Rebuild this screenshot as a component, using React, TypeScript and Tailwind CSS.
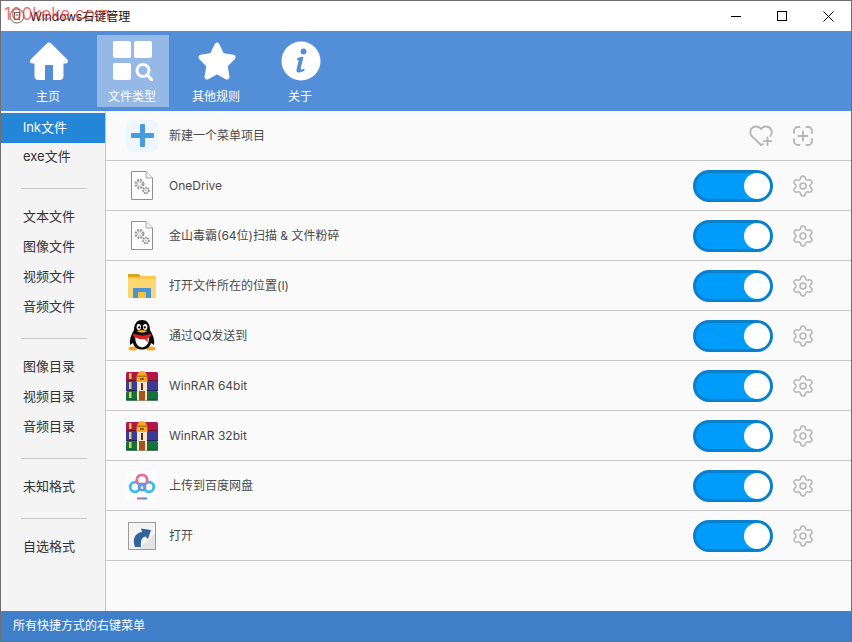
import { ReactNode } from 'react'
import { Settings } from 'lucide-react'

const FONT = "font-['Inter','Noto_Sans_CJK_SC',sans-serif]"

function HomeIcon() {
  return (
    <svg width="40" height="40" viewBox="0 0 40 40">
      <path
        d="M20 1.5 a3 3 0 0 1 2.2 1 L38.4 18.6 a2.2 2.2 0 0 1 -1.6 3.8 H34.5 V35 a4 4 0 0 1 -4 4 H24 V24 H16 V39 H9.5 a4 4 0 0 1 -4 -4 V22.4 H3.2 a2.2 2.2 0 0 1 -1.6 -3.8 L17.8 2.5 a3 3 0 0 1 2.2 -1z"
        fill="#fff"
      />
    </svg>
  )
}

function FileTypeIcon() {
  return (
    <svg width="40" height="40" viewBox="0 0 40 40">
      <rect x="0" y="0" width="18" height="17" rx="2" fill="#fff" />
      <rect x="21" y="0" width="18" height="17" rx="2" fill="#fff" />
      <rect x="0" y="22" width="18" height="17" rx="2" fill="#fff" />
      <circle cx="30" cy="29.5" r="6" fill="none" stroke="#fff" strokeWidth="3" />
      <path d="M34.5 34 L39 39" stroke="#fff" strokeWidth="3.2" strokeLinecap="round" />
    </svg>
  )
}

function StarIcon() {
  return (
    <svg width="40" height="40" viewBox="0 0 40 40">
      <path
        d="M20 4 L25 14.5 L36 16.2 L28 24.5 L30 36 L20 30.5 L10 36 L12 24.5 L4 16.2 L15 14.5z"
        fill="#fff"
        stroke="#fff"
        strokeWidth="5"
        strokeLinejoin="round"
      />
    </svg>
  )
}

function InfoIcon() {
  return (
    <svg width="40" height="40" viewBox="0 0 40 40">
      <circle cx="20" cy="20" r="19.5" fill="#fff" />
      <circle cx="22.5" cy="10.5" r="3" fill="#528fd8" />
      <path
        d="M16 17.5 Q19 15.5 22.5 15.8 L19.8 27 Q19.5 29 21 28.6 L23.5 27.5 L23.5 29.5 Q20 32 17 31.5 Q15 31 15.6 28 L17.8 19 L16 19.5z"
        fill="#528fd8"
      />
    </svg>
  )
}

function NavItem({ icon, label, active }: { icon: ReactNode; label: string; active?: boolean }) {
  return (
    <div
      className={
        'w-[72px] h-[72px] flex flex-col items-center pt-[6px] text-[12px] leading-[16px] text-white ' +
        (active ? 'bg-[#95b9e7]' : '')
      }
    >
      {icon}
      <span className="mt-[8px] mr-[2px]">{label}</span>
    </div>
  )
}

function DocGearIcon() {
  return (
    <svg width="22" height="29" viewBox="0 0 22 29">
      <path d="M.5.5 H15 L21.5 7 V28.5 H.5z" fill="#fff" stroke="#8f8f8f" />
      <path d="M15 .5 V7 H21.5" fill="#f2f2f2" stroke="#a8a8a8" />
      <circle cx="8.5" cy="13" r="3.8" fill="none" stroke="#9a9a9a" strokeWidth="2.4" strokeDasharray="2 1" />
      <circle cx="8.5" cy="13" r="2" fill="none" stroke="#c4c4c4" />
      <circle cx="15" cy="19.5" r="2.8" fill="none" stroke="#8e8e8e" strokeWidth="2" strokeDasharray="1.6 .8" />
      <circle cx="15" cy="19.5" r="1" fill="#bbb" />
    </svg>
  )
}

function PlusIcon() {
  return (
    <div className="w-[32px] h-[32px] flex items-center justify-center rounded-[6px] bg-[#eef5fc]">
      <svg width="23" height="23" viewBox="0 0 23 23">
        <rect x="9" y="0" width="5" height="23" rx="1" fill="#4a9ae0" />
        <rect x="0" y="9" width="23" height="5" rx="1" fill="#4a9ae0" />
      </svg>
    </div>
  )
}

function FolderIcon() {
  return (
    <svg width="28" height="25" viewBox="0 0 28 25">
      <path d="M0 1 H11 L13 4 H0z" fill="#d6a51e" />
      <path d="M0 4 H28 V25 H0z" fill="#fdd872" />
      <path d="M0 4 H12 L13 3 H27 a1 1 0 0 1 1 1 V6 H0z" fill="#f7c94f" />
      <path d="M5 15 H23 V25 H18 V19 H10 V25 H5z" fill="#4a94d6" />
      <rect x="10" y="19" width="8" height="6" fill="#f5c33a" />
    </svg>
  )
}

function QQIcon() {
  return (
    <svg width="28" height="32" viewBox="0 0 28 32">
      <ellipse cx="5" cy="28.5" rx="4.5" ry="2" fill="#f5a623" />
      <ellipse cx="23" cy="28.5" rx="4.5" ry="2" fill="#f5a623" />
      <path d="M14 0 C8 0 6 5 6 10 C3 15 1 20 2 25 L5 23 C6 27 9 29.5 14 29.5 C19 29.5 22 27 23 23 L26 25 C27 20 25 15 22 10 C22 5 20 0 14 0z" fill="#0a0a0a" />
      <path d="M7.5 16 C10 19 18 19 20.5 16 C21.5 20 21 26 14 27.5 C9 27 6.5 21 7.5 16z" fill="#fff" />
      <path d="M5.5 13.5 C10 16 18 16 22.5 13.5 L23 16 C21 17.5 20 18 19.5 18 L20 22 L16.5 19 C12 19.5 8 18.5 5 16z" fill="#e02020" />
      <ellipse cx="10.8" cy="7" rx="2.2" ry="3" fill="#fff" />
      <ellipse cx="17.2" cy="7" rx="2.2" ry="3" fill="#fff" />
      <circle cx="11.2" cy="7.4" r="1.1" fill="#000" />
      <circle cx="16.8" cy="7.4" r="1.1" fill="#000" />
      <path d="M8.5 11 Q14 9 19.5 11 Q14 14.5 8.5 11z" fill="#f5a623" />
    </svg>
  )
}

function WinRarIcon() {
  return (
    <svg width="32" height="30" viewBox="0 0 32 30">
      {/* three stacked books */}
      <rect x="0" y="1" width="32" height="9" rx="1.5" fill="#b3174a" />
      <rect x="0" y="10" width="32" height="10" fill="#3b3a96" />
      <rect x="0" y="20" width="32" height="9.5" rx="1.5" fill="#17713a" />
      <rect x="0" y="9" width="32" height="1" fill="#6e1030" />
      <rect x="0" y="19" width="32" height="1" fill="#23235f" />
      <rect x="0" y="28.5" width="32" height="1" fill="#0e4a26" />
      <rect x="3" y="2" width="2.5" height="6" fill="#e8c24a" />
      <rect x="3" y="11" width="2.5" height="7" fill="#e0c878" />
      <rect x="3" y="21" width="2.5" height="6" fill="#d8d050" />
      {/* strap */}
      <rect x="11" y="10" width="10" height="19.5" fill="#efe6d2" />
      <rect x="13" y="20" width="6" height="9.5" fill="#a9521a" />
      <rect x="15" y="12" width="2" height="7" fill="#6b2c10" />
      <path d="M10.5 9 Q10.5 0 16 0 Q21.5 0 21.5 9 V11 H10.5z" fill="#f2ab22" />
      <rect x="10.5" y="4.5" width="11" height="1.5" fill="#b57510" />
      <rect x="14" y="7" width="4" height="2" fill="#8c5a10" />
    </svg>
  )
}

function BaiduIcon() {
  return (
    <div className="w-[30px] h-[30px] bg-white rounded-[4px] flex items-center justify-center">
      <svg width="28" height="28" viewBox="0 0 28 28">
        <circle cx="7" cy="15" r="4.8" fill="none" stroke="#35bdf0" strokeWidth="2.8" />
        <circle cx="21" cy="15" r="4.8" fill="none" stroke="#35bdf0" strokeWidth="2.8" />
        <circle cx="14" cy="8" r="5.2" fill="none" stroke="#ea6c8e" strokeWidth="2.8" />
        <circle cx="14" cy="15" r="3.2" fill="none" stroke="#5c9be8" strokeWidth="2.4" />
        <rect x="9" y="25.5" width="5" height="2" fill="#ee5a84" />
        <rect x="14" y="25.5" width="5" height="2" fill="#3d8fe8" />
      </svg>
    </div>
  )
}

function ShortcutIcon() {
  return (
    <svg width="28" height="28" viewBox="0 0 28 28">
      <rect x=".5" y=".5" width="27" height="27" fill="#f4f4f4" stroke="#9a9a9a" />
      <path d="M27 27 H10 L27 12z" fill="#e4e4e4" />
      <path d="M7 25 C4 17 7 11 14 10 L13 6.5 L23 8 L20 17 L17.5 14.5 C13 15.5 12.5 20 13 25z" fill="#30639f" />
    </svg>
  )
}

function HeartPlusIcon() {
  return (
    <svg width="24" height="22" viewBox="0 0 24 22" fill="none" stroke="#b5b5b5" strokeWidth="1.8" strokeLinecap="round">
      <path d="M12 20 L3 11.5 C-0.5 7 2 1.5 7 1.5 C9 1.5 11 2.5 12 4 C13 2.5 15 1.5 17 1.5 C22 1.5 24.5 7 21.5 11" />
      <path d="M12 20 L14 19" />
      <path d="M18.5 12.5 V20 M14.8 16.2 H22.2" />
    </svg>
  )
}

function ScanPlusIcon() {
  return (
    <svg width="20" height="20" viewBox="0 0 20 20" fill="none" stroke="#b5b5b5" strokeWidth="1.8" strokeLinecap="round">
      <path d="M1 7 V5 A4 4 0 0 1 5 1 H6.5" />
      <path d="M13.5 1 H15 A4 4 0 0 1 19 5 V7" />
      <path d="M19 13 V15 A4 4 0 0 1 15 19 H13.5" />
      <path d="M6.5 19 H5 A4 4 0 0 1 1 15 V13" />
      <path d="M10 5.5 V14.5 M5.5 10 H14.5" />
    </svg>
  )
}

function Toggle() {
  return (
    <div className="w-[80px] h-[32px] rounded-full bg-[#009cfb] border-[3px] border-[#0a7fcc] flex items-center justify-end">
      <div className="w-[26px] h-[26px] rounded-full bg-white" />
    </div>
  )
}

const ROWS: { icon: ReactNode; label: string }[] = [
  { icon: <DocGearIcon />, label: 'OneDrive' },
  { icon: <DocGearIcon />, label: '金山毒霸(64位)扫描 & 文件粉碎' },
  { icon: <FolderIcon />, label: '打开文件所在的位置(I)' },
  { icon: <QQIcon />, label: '通过QQ发送到' },
  { icon: <WinRarIcon />, label: 'WinRAR 64bit' },
  { icon: <WinRarIcon />, label: 'WinRAR 32bit' },
  { icon: <BaiduIcon />, label: '上传到百度网盘' },
  { icon: <ShortcutIcon />, label: '打开' },
]

const GROUPS = [
  ['exe文件'],
  ['文本文件', '图像文件', '视频文件', '音频文件'],
  ['图像目录', '视频目录', '音频目录'],
  ['未知格式'],
  ['自选格式'],
]

function Row({ icon, label, right }: { icon: ReactNode; label: string; right: ReactNode }) {
  return (
    <div className="h-[50px] flex items-center border-b border-[#c8c8c8] pl-[20px] pr-[38px] text-[12px] text-[#4a4a4a]">
      <div className="w-[32px] flex items-center justify-center">{icon}</div>
      <span className="ml-[11px] flex-1">{label}</span>
      {right}
    </div>
  )
}

export default function App() {
  return (
    <div className={'relative w-[852px] h-[642px] flex flex-col bg-white border border-[#707070] overflow-hidden ' + FONT}>
      {/* title bar */}
      <div className="h-[30px] flex items-center text-[12px] text-[#111]">
        <svg className="ml-[7px]" width="18" height="18" viewBox="0 0 18 18" fill="none" stroke="#666">
          <circle cx="9" cy="9" r="7" />
          <rect x="6.5" y="5.5" width="5" height="7" />
          <path d="M7.5 8 H10.5" />
        </svg>
        <span className="ml-[4px] mt-px">Windows右键管理</span>
        <div className="ml-auto flex items-center">
          <div className="w-[46px] h-[30px] flex items-center justify-center">
            <div className="w-[10px] h-[1px] bg-black" />
          </div>
          <div className="w-[46px] h-[30px] flex items-center justify-center">
            <div className="w-[10px] h-[10px] border border-black" />
          </div>
          <div className="w-[46px] h-[30px] flex items-center justify-center">
            <svg width="11" height="11" viewBox="0 0 11 11" stroke="#000">
              <path d="M.5 .5 L10.5 10.5 M10.5 .5 L.5 10.5" />
            </svg>
          </div>
        </div>
      </div>

      {/* toolbar */}
      <div className="h-[80px] bg-[#528fd8] flex items-start pt-[4px] pl-[12px] gap-[12px]">
        <NavItem icon={<HomeIcon />} label="主页" />
        <NavItem icon={<FileTypeIcon />} label="文件类型" active />
        <NavItem icon={<StarIcon />} label="其他规则" />
        <NavItem icon={<InfoIcon />} label="关于" />
      </div>

      {/* body */}
      <div className="flex-1 flex min-h-0">
        <div className="w-[105px] bg-[#f4f4f4] border-r border-[#c4c4c4] pt-[2px] text-[13px] text-[#333]">
          <div className="h-[30px] bg-[#2486d6] text-white flex items-center pl-[22px]">lnk文件</div>
          {GROUPS.map((group, i) => (
            <div key={i}>
              {i > 0 && (
                <div className="h-[30px] flex items-center">
                  <div className="ml-[20px] w-[66px] h-px bg-[#c8c8c8]" />
                </div>
              )}
              {group.map((name) => (
                <div key={name} className="h-[30px] flex items-center pl-[22px] pb-[2px]">
                  {name}
                </div>
              ))}
            </div>
          ))}
        </div>

        <div className="flex-1 bg-[#fafafa]">
          <Row
            icon={<PlusIcon />}
            label="新建一个菜单项目"
            right={
              <div className="flex items-center">
                <HeartPlusIcon />
                <div className="ml-[20px]">
                  <ScanPlusIcon />
                </div>
              </div>
            }
          />
          {ROWS.map((row, i) => (
            <Row
              key={i}
              icon={row.icon}
              label={row.label}
              right={
                <div className="flex items-center">
                  <Toggle />
                  <div className="ml-[18px] -mr-[2px]">
                    <Settings size={24} color="#b5b5b5" strokeWidth={1.5} />
                  </div>
                </div>
              }
            />
          ))}
        </div>
      </div>

      {/* status bar */}
      <div className="h-[30px] bg-[#3f7fc9] text-white text-[12px] flex items-center pl-[12px]">
        所有快捷方式的右键菜单
      </div>

      {/* site watermark over the title bar */}
      <div className="absolute left-[3px] top-[3px] text-[17px] leading-[20px] text-[#e33] opacity-70 pointer-events-none">
        100keke.com
      </div>
    </div>
  )
}
